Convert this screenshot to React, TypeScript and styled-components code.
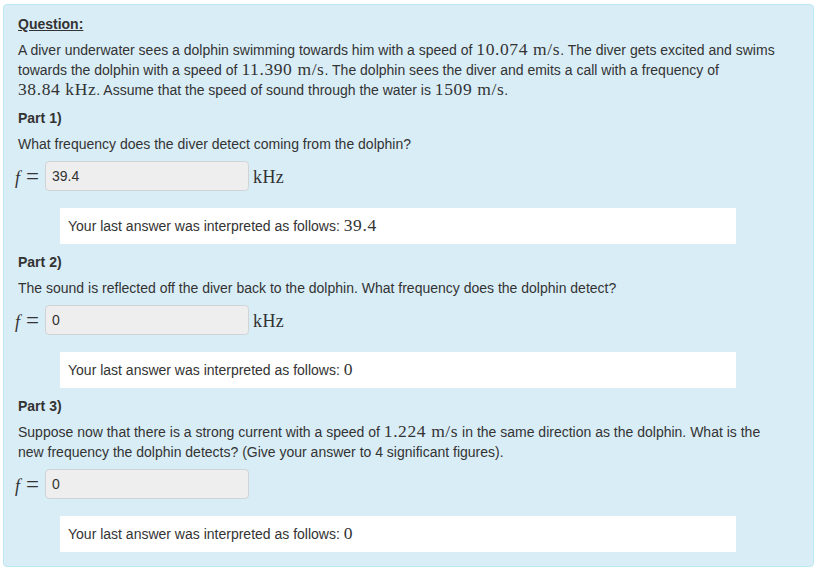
import React from "react";
import styled, { createGlobalStyle } from "styled-components";

const GlobalStyle = createGlobalStyle`
  html, body {
    margin: 0;
    padding: 0;
    background: #ffffff;
  }
  body {
    font-family: "Liberation Sans", Arial, Helvetica, sans-serif;
    font-size: 14px;
    line-height: 20px;
    color: #333333;
  }
`;

const Page = styled.div`
  padding: 4px 4px 8px 3px;
`;

const Panel = styled.div`
  width: 811px;
  box-sizing: border-box;
  background: #d9edf7;
  border: 1px solid #bce8f1;
  border-radius: 4px;
  padding: 9px 14px 14px 14px;
  display: flex;
  flex-direction: column;
`;

const Heading = styled.div`
  font-weight: bold;
  text-decoration: underline;
  line-height: 20px;
`;

const Para = styled.p<{ $top: number }>`
  margin: ${(p) => p.$top}px 0 0 0;
  line-height: 20px;
`;

const PartTitle = styled.div`
  margin-top: 8px;
  font-weight: bold;
  line-height: 20px;
`;

const M = styled.span`
  font-family: "Liberation Serif", "Times New Roman", serif;
  font-size: 17.5px;
  letter-spacing: 0.6px;
  line-height: 1;
`;

const AnswerRow = styled.div`
  margin-top: 7px;
  height: 30px;
  display: flex;
  align-items: center;
`;

const Label = styled.span`
  width: 27px;
  flex: none;
  display: inline-flex;
  align-items: baseline;
  font-family: "Liberation Serif", "Times New Roman", serif;
  font-size: 18px;
  position: relative;
  top: 1px;
`;

const Var = styled.i`
  margin-left: -3px;
`;

const Eq = styled.span`
  font-size: 23px;
  margin-left: 6px;
`;

const Field = styled.input`
  width: 204px;
  height: 30px;
  box-sizing: border-box;
  border: 1px solid #cfd4d6;
  border-radius: 4px;
  background: #eeeeee;
  padding: 0 6px;
  margin: 0;
  font-family: "Liberation Sans", Arial, sans-serif;
  font-size: 14px;
  color: #333333;
  outline: none;
`;

const Unit = styled.span`
  margin-left: 4px;
  font-family: "Liberation Serif", "Times New Roman", serif;
  font-size: 18px;
  letter-spacing: 0.4px;
  position: relative;
  top: 1px;
`;

const Feedback = styled.div<{ $top: number }>`
  margin: ${(p) => p.$top}px 63px 0 42px;
  background: #ffffff;
  padding: 8px;
  line-height: 20px;
`;

type PartProps = {
  n: number;
  prompt: React.ReactNode;
  value: string;
  unit?: string;
  answer: string;
  fbTop: number;
};

const Part = ({ n, prompt, value, unit, answer, fbTop }: PartProps) => (
  <>
    <PartTitle>Part {n})</PartTitle>
    <Para $top={6}>{prompt}</Para>
    <AnswerRow>
      <Label>
        <Var>f</Var>
        <Eq>=</Eq>
      </Label>
      <Field readOnly value={value} />
      {unit && <Unit>{unit}</Unit>}
    </AnswerRow>
    <Feedback $top={fbTop}>
      Your last answer was interpreted as follows: <M>{answer}</M>
    </Feedback>
  </>
);

export default function App() {
  return (
    <>
      <GlobalStyle />
      <Page>
        <Panel>
          <Heading>Question:</Heading>
          <Para $top={6}>
            A diver underwater sees a dolphin swimming towards him with a speed of <M>10.074 m/s</M>. The diver gets excited and swims
            <br />
            towards the dolphin with a speed of <M>11.390 m/s</M>. The dolphin sees the diver and emits a call with a frequency of
            <br />
            <M>38.84 kHz</M>. Assume that the speed of sound through the water is <M>1509 m/s</M>.
          </Para>
          <Part
            n={1}
            prompt="What frequency does the diver detect coming from the dolphin?"
            value="39.4"
            unit="kHz"
            answer="39.4"
            fbTop={17}
          />
          <Part
            n={2}
            prompt="The sound is reflected off the diver back to the dolphin. What frequency does the dolphin detect?"
            value="0"
            unit="kHz"
            answer="0"
            fbTop={17}
          />
          <Part
            n={3}
            prompt={
              <>
                Suppose now that there is a strong current with a speed of <M>1.224 m/s</M> in the same direction as the dolphin. What is the
                <br />
                new frequency the dolphin detects? (Give your answer to 4 significant figures).
              </>
            }
            value="0"
            answer="0"
            fbTop={17}
          />
        </Panel>
      </Page>
    </>
  );
}
